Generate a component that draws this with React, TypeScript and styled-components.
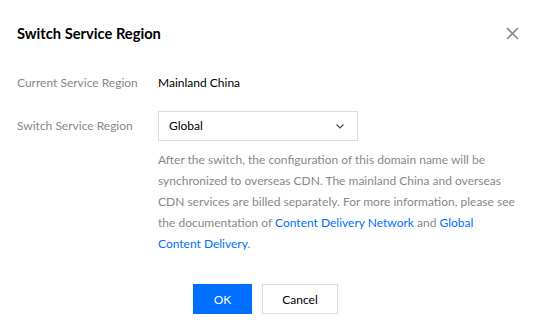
import React from 'react';
import styled, { createGlobalStyle } from 'styled-components';

const GlobalStyle = createGlobalStyle`
  html, body {
    margin: 0;
    padding: 0;
    background: #fff;
  }
  body {
    font-family: Lato, "Noto Sans", "Liberation Sans", sans-serif;
    font-size: 12px;
    color: #000;
  }
`;

const Dialog = styled.div`
  width: 535px;
  height: 336px;
  box-sizing: border-box;
  padding: 23px 17px 0;
  background: #fff;
`;

const Header = styled.div`
  display: flex;
  justify-content: space-between;
  align-items: center;
  height: 20px;
`;

const Title = styled.h3`
  margin: 0;
  font-size: 14.7px;
  font-weight: 700;
  line-height: 20px;
  color: #000;
`;

const CloseButton = styled.button`
  display: flex;
  align-items: center;
  justify-content: center;
  width: 14px;
  height: 14px;
  padding: 0;
  margin-right: -1px;
  border: none;
  background: none;
  cursor: pointer;
`;

const Form = styled.div`
  display: grid;
  grid-template-columns: 141px 1fr;
  row-gap: 13px;
  margin-top: 25px;
`;

const Label = styled.div`
  display: flex;
  align-items: center;
  height: 30px;
  line-height: 20px;
  color: #888;
`;

const Value = styled.div`
  display: flex;
  align-items: center;
  height: 30px;
  line-height: 20px;
  color: #000;
`;

const Field = styled.div`
  display: flex;
  flex-direction: column;
`;

const Select = styled.div`
  display: flex;
  align-items: center;
  justify-content: space-between;
  box-sizing: border-box;
  width: 200px;
  height: 30px;
  padding: 0 13px 0 10px;
  border: 1px solid #ddd;
  line-height: 20px;
  color: #000;
`;

const Hint = styled.p`
  margin: 8px 0 0;
  line-height: 21px;
  color: #888;
`;

const Link = styled.a`
  color: #006eff;
  text-decoration: none;
`;

const Footer = styled.div`
  display: flex;
  justify-content: center;
  gap: 10px;
  margin-top: 30px;
  padding-right: 4px;
`;

const Button = styled.button<{ $primary?: boolean }>`
  box-sizing: border-box;
  width: ${(p) => (p.$primary ? '59px' : '76px')};
  height: 30px;
  padding: 0;
  font-family: inherit;
  font-size: 12px;
  border: 1px solid ${(p) => (p.$primary ? '#006eff' : '#ddd')};
  background: ${(p) => (p.$primary ? '#006eff' : '#fff')};
  color: ${(p) => (p.$primary ? '#fff' : '#000')};
  cursor: pointer;
`;

const App = () => (
  <>
    <GlobalStyle />
    <Dialog>
      <Header>
        <Title>Switch Service Region</Title>
        <CloseButton aria-label="Close">
          <svg width="13" height="13" viewBox="0 0 13 13">
            <path d="M1 1L12 12M12 1L1 12" stroke="#888" strokeWidth="1.6" fill="none" />
          </svg>
        </CloseButton>
      </Header>
      <Form>
        <Label>Current Service Region</Label>
        <Value>Mainland China</Value>
        <Label>Switch Service Region</Label>
        <Field>
          <Select>
            <span>Global</span>
            <svg width="8" height="5" viewBox="0 0 8 5">
              <path d="M0.5 0.5L4 4L7.5 0.5" stroke="#444" strokeWidth="1.1" fill="none" />
            </svg>
          </Select>
          <Hint>
            After the switch, the configuration of this domain name will be synchronized to
            overseas CDN. The mainland China and overseas CDN services are billed separately.
            For more information, please see the documentation of{' '}
            <Link href="#">Content Delivery Network</Link> and{' '}
            <Link href="#">Global Content Delivery</Link>.
          </Hint>
        </Field>
      </Form>
      <Footer>
        <Button $primary>OK</Button>
        <Button>Cancel</Button>
      </Footer>
    </Dialog>
  </>
);

export default App;
